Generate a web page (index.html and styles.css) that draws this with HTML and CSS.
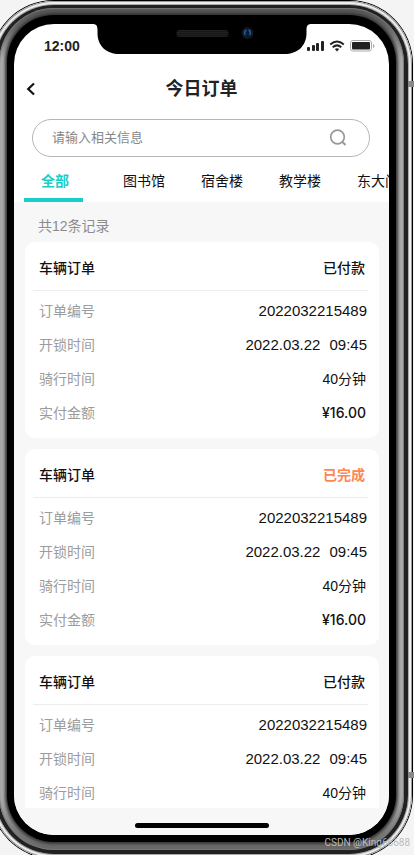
FILE: index.html
```html
<!DOCTYPE html>
<html lang="zh-CN">
<head>
<meta charset="utf-8">
<meta name="viewport" content="width=device-width, initial-scale=1">
<title>今日订单</title>
<link rel="stylesheet" href="styles.css">
</head>
<body>
<div class="shell">
  <div class="chrome">
    <div class="band">
      <div class="rail">
        <div class="bezel">
          <div class="screen">
            <svg class="notch" width="219" height="31" viewBox="0 0 219 31" aria-hidden="true">
              <defs>
                <pattern id="mesh" width="2" height="2" patternUnits="userSpaceOnUse"><rect width="2" height="2" fill="#161616"/><rect width="1" height="1" fill="#2c2c2c"/></pattern>
              </defs>
              <path d="M0 0C4 0 5 2 5 6V9C5 22 14 30 27 30H192C205 30 214 22 214 9V6C214 2 215 0 219 0Z"/>
              <rect x="84" y="6" width="52" height="7" rx="3" fill="url(#mesh)"/>
              <circle cx="155" cy="9" r="6" fill="#14171d"/>
              <circle cx="155" cy="9" r="4" fill="#0c1b34"/>
              <path d="M153 11a3 3 0 0 1 1-5M156 6a3 3 0 0 1 1 5" fill="none" stroke="#285d9c" stroke-width="1.5"/>
            </svg>
            <div class="status">
              <span>12:00</span>
              <svg width="68" height="12" viewBox="0 0 68 12" aria-hidden="true">
                <g fill="#222"><rect x="0" y="7" width="3" height="4" rx="1"/><rect x="5" y="5" width="3" height="6" rx="1"/><rect x="9" y="3" width="3" height="8" rx="1"/><rect x="14" y="1" width="3" height="10" rx="1"/></g>
                <g fill="none" stroke="#222" stroke-width="2"><path d="M23.2 4.4Q30 -1.4 36.8 4.4"/><path d="M25.7 7.2Q30 3.6 34.3 7.2"/></g>
                <path d="M27.8 9Q30 7.4 32.2 9L30 11.4Z" fill="#222"/>
                <rect x="43.5" y=".5" width="21" height="10.500" rx="2.500" fill="#fff" stroke="#aaa"/>
                <rect x="45" y="2" width="18" height="7.500" rx="1" fill="#222"/>
                <path d="M66 4V8Q67.500 7.500 67.500 6T66 4" fill="#aaa"/>
              </svg>
            </div>
            <header class="header">
              <button class="back" type="button" aria-label="返回"><svg width="10" height="14" viewBox="0 0 10 14" aria-hidden="true"><path d="M8 1.500L2.200 7L8 12.500" fill="none" stroke="#111" stroke-width="2.200"/></svg></button>
              <h1>今日订单</h1>
            </header>
            <form class="search">
              <input type="text" placeholder="请输入相关信息" aria-label="搜索">
              <button type="button" aria-label="搜索"><svg width="18" height="18" viewBox="0 0 18 18" fill="none" stroke="#999" aria-hidden="true"><circle cx="8.500" cy="8" r="6.800" stroke-width="1.700"/><path d="M13 12.500L16.500 16" stroke-width="2"/></svg></button>
            </form>
            <nav class="tabs">
              <a class="active" href="#all">全部</a>
              <a href="#library">图书馆</a>
              <a href="#dorm">宿舍楼</a>
              <a href="#teaching">教学楼</a>
              <a href="#east">东大门</a>
            </nav>
            <main class="orders">
              <p class="count">共12条记录</p>
              <article class="card">
                <header><h2>车辆订单</h2><strong>已付款</strong></header>
                <dl>
                  <div><dt>订单编号</dt><dd>2022032215489</dd></div>
                  <div><dt>开锁时间</dt><dd><time><span>2022.03.22</span><span>09:45</span></time></dd></div>
                  <div><dt>骑行时间</dt><dd class="short">40分钟</dd></div>
                  <div><dt>实付金额</dt><dd class="short price">¥16.00</dd></div>
                </dl>
              </article>
              <article class="card">
                <header><h2>车辆订单</h2><strong class="done">已完成</strong></header>
                <dl>
                  <div><dt>订单编号</dt><dd>2022032215489</dd></div>
                  <div><dt>开锁时间</dt><dd><time><span>2022.03.22</span><span>09:45</span></time></dd></div>
                  <div><dt>骑行时间</dt><dd class="short">40分钟</dd></div>
                  <div><dt>实付金额</dt><dd class="short price">¥16.00</dd></div>
                </dl>
              </article>
              <article class="card">
                <header><h2>车辆订单</h2><strong>已付款</strong></header>
                <dl>
                  <div><dt>订单编号</dt><dd>2022032215489</dd></div>
                  <div><dt>开锁时间</dt><dd><time><span>2022.03.22</span><span>09:45</span></time></dd></div>
                  <div><dt>骑行时间</dt><dd class="short">40分钟</dd></div>
                </dl>
              </article>
            </main>
            <footer class="home"><span></span></footer>
          </div>
        </div>
      </div>
    </div>
  </div>
  <i class="seam seam-top"></i>
  <i class="seam seam-bottom"></i>
</div>
<div class="watermark">CSDN @King66688</div>
</body>
</html>
```
FILE: styles.css
```css
* { box-sizing: border-box; }
html { height: 100%; overflow: hidden; }
body {
  position: relative;
  height: 100%;
  margin: 0;
  overflow: hidden;
  background: #f4f4f4;
  color: #111;
  font: 14px/20px "Liberation Sans", "Noto Sans CJK SC", sans-serif;
}
h1, h2, p, dl, dd { margin: 0; }
button { padding: 0; border: 0; background: none; }
svg { display: block; }

/* Device body: concentric layers from the outer edge to the glass */
.shell {
  position: relative;
  height: calc(100% + 4px);
  margin: 0 1px 0 -10px;
  padding: 1px;
  border-radius: 64px;
  background: #000;
}
.chrome {
  height: 100%;
  padding: 4px;
  border-radius: 63px;
  background: #eee;
  box-shadow: inset 0 0 0 1px #999, inset 0 0 0 3px #eee, inset 0 0 0 4px #aaa;
}
.band {
  height: 100%;
  padding: 3px 4px 4px;
  border-radius: 59px;
  background: #202222;
}
.rail {
  height: 100%;
  padding: 7px 8px 8px;
  border-radius: 55px;
  background: linear-gradient(#555 0, #666 20px, #aaa 50px, #aaa calc(100% - 50px), #777 calc(100% - 15px), #666 100%);
  box-shadow: inset 0 0 1px 1px #777;
}
.bezel {
  height: 100%;
  padding: 9px 7px 7px;
  border-radius: 47px;
  background: #000;
  box-shadow: 0 0 3px 2px #333;
}
.seam {
  position: absolute;
  right: -1px;
  width: 6px;
  height: 6px;
  background: #888;
}
.seam-top { top: 81px; }
.seam-bottom { bottom: 81px; }

.screen {
  position: relative;
  display: flex;
  flex-direction: column;
  height: 100%;
  overflow: hidden;
  border-radius: 40px;
  background: #fff;
}
.notch {
  position: absolute;
  top: 0;
  left: 50%;
  transform: translateX(-50%);
}
.status {
  display: flex;
  align-items: center;
  justify-content: space-between;
  height: 44px;
  padding: 0 14px 0 30px;
  color: #222;
  font-weight: bold;
}
.header {
  display: grid;
  grid-template-columns: 32px 1fr 32px;
  align-items: center;
  height: 42px;
}
.back { padding-left: 12px; }
.header h1 {
  color: #222;
  font-size: 18px;
  line-height: 24px;
  text-align: center;
}
.search {
  display: flex;
  align-items: center;
  flex: none;
  height: 38px;
  margin: 9px 19px 0 18px;
  padding: 0 22px 0 19px;
  border: 1px solid #b5b5b5;
  border-radius: 19px;
}
.search input {
  flex: 1;
  min-width: 0;
  padding: 0;
  border: 0;
  outline: 0;
  background: none;
  font: inherit;
  font-size: 13px;
}
.search input::placeholder { color: #888; opacity: 1; }
.tabs {
  display: flex;
  flex: none;
  height: 45px;
  padding-left: 10px;
  overflow: hidden;
}
.tabs a {
  flex: none;
  padding: 14px 18px 0;
  border-bottom: 4px solid transparent;
  color: #111;
  text-decoration: none;
}
.tabs .active {
  margin-right: 22px;
  padding: 14px 14px 0 17px;
  border-color: #19cec8;
  color: #19cec8;
  font-weight: bold;
}

.orders {
  display: flex;
  flex: 1;
  flex-direction: column;
  gap: 11px;
  min-height: 0;
  padding: 0 10px 0 11px;
  overflow: hidden;
  background: #f7f7f7;
}
.count {
  flex: none;
  height: 29px;
  padding: 14px 13px 0;
  color: #8c8c8c;
}
.card {
  flex: none;
  padding: 0 11px 8px 8px;
  border-radius: 10px;
  background: #fff;
}
.card header {
  display: flex;
  align-items: center;
  justify-content: space-between;
  height: 49px;
  padding: 4px 3px 0 6px;
  border-bottom: 1px solid #ececec;
}
.card h2, .card strong {
  font-size: 14px;
  font-weight: 500;
}
.card .done {
  color: #ff8652;
  font-weight: bold;
}
.card dl { padding: 3px 1px 0 6px; }
.card dl div {
  display: flex;
  align-items: center;
  justify-content: space-between;
  height: 34px;
}
.card dt { color: #9c9c9c; }
.card dd { font-size: 15px; }
.card time { display: flex; gap: 9px; }
.card .short {
  padding-right: 1px;
  font-size: 14px;
}
.card .price {
  font-family: Inter, "Liberation Sans", sans-serif;
  font-weight: 500;
}

.home {
  display: flex;
  justify-content: center;
  flex: none;
  height: 27px;
  padding-top: 15px;
  background: #f7f7f7;
}
.home span {
  width: 134px;
  height: 5px;
  border-radius: 3px;
  background: #000;
}
.watermark {
  position: absolute;
  right: 4px;
  bottom: 4px;
  color: #bbb;
  font-family: Roboto, "Liberation Sans", sans-serif;
  font-size: 10px;
  line-height: 16px;
}
```
